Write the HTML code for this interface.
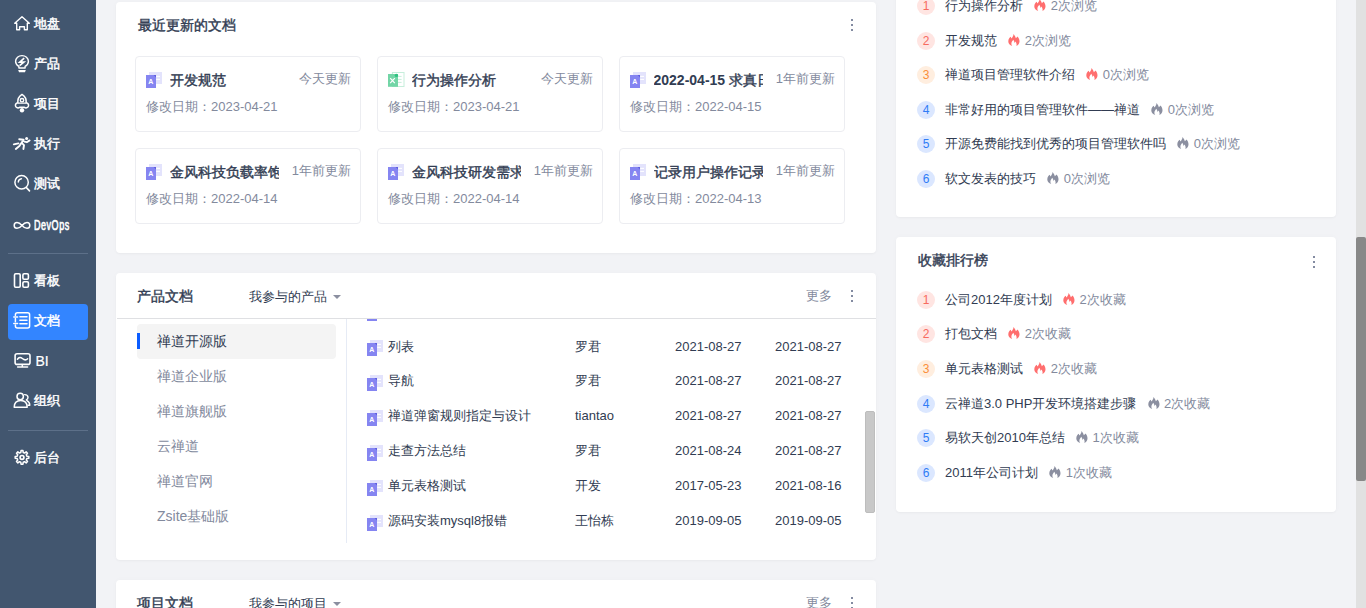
<!DOCTYPE html>
<html><head><meta charset="utf-8">
<style>
*{box-sizing:border-box;margin:0;padding:0}
html,body{width:1366px;height:608px;overflow:hidden}
body{font-family:"Liberation Sans",sans-serif;background:#f2f3f6;position:relative;color:#313c52;font-size:13px}
.abs{position:absolute}
#side{position:absolute;left:0;top:0;width:96px;height:608px;background:#42566f}
.mi{position:absolute;left:8px;width:80px;height:36px;color:#fff;font-weight:bold;font-size:13px;border-radius:4px}
.mi svg{position:absolute;left:6px;top:10px;width:16px;height:16px}
.mi span{position:absolute;left:26px;top:0;line-height:36px}
.mi.act{background:#3385ff}
.st{position:absolute;left:34px;line-height:20px;color:#fff;font-weight:normal;-webkit-text-stroke:0.45px #fff;font-size:13px;white-space:nowrap}
.dev{font-size:15px;-webkit-text-stroke:0.7px #fff;letter-spacing:.9px;transform:scaleX(.6);transform-origin:0 0}
.sep{position:absolute;left:8px;width:80px;height:1px;background:#5d7089}
.card{position:absolute;background:#fff;border-radius:4px;box-shadow:0 1px 2px rgba(0,0,0,.03),0 0 6px rgba(0,0,0,.025)}
.ttl{position:absolute;font-size:14px;font-weight:normal;-webkit-text-stroke:0.4px #313c52;color:#313c52;line-height:20px}
.kebab{position:absolute;width:2px;height:12px}
.kebab i{position:absolute;left:0;width:2.4px;height:2.4px;border-radius:50%;background:#5a6582}
.dc{position:absolute;width:226px;height:76px;border:1px solid #ecedf1;border-radius:4px;background:#fff}
.dc .ic{position:absolute;left:10px;top:15px}
.dc .nm{position:absolute;left:33.5px;top:13px;font-size:14px;font-weight:normal;-webkit-text-stroke:0.4px #313c52;line-height:20px;white-space:nowrap;overflow:hidden;width:109.5px}
.dc .up{position:absolute;right:9px;top:12px;font-size:13px;color:#838a9d;line-height:20px}
.dc .dt{position:absolute;left:10px;top:40px;font-size:13px;color:#838a9d;line-height:20px}
.tr{position:absolute;left:0;width:529px;height:35px}
.tr .ti{position:absolute;left:20px;top:10.5px}
.tr span{position:absolute;top:7px;line-height:20px;font-size:13px;white-space:nowrap;color:#313c52}
.tr .c1{left:41px}.tr .c2{left:228px}.tr .c3{left:328px}.tr .c4{left:428px}
.gray{color:#838a9d}
.row{position:absolute;left:0;height:35px;line-height:20px;font-size:13px;white-space:nowrap}
.row > *{position:absolute;top:0}
.rk{position:absolute;left:21px;height:18px;line-height:18px;font-size:13px;white-space:nowrap}
.rk .b{position:absolute;left:0;top:0;width:18px;height:18px;border-radius:50%;text-align:center;font-size:12px}
.rk .t{position:absolute;left:28px;top:-1px;line-height:20px}
.rk .fi{display:inline-block;vertical-align:top;margin:3px 4.5px 0 11.2px}
.b1{background:#ffe5e2;color:#f76b5f}
.b3{background:#ffeedf;color:#fa8f3a}
.b4{background:#dbe7ff;color:#2f7cf6}
.pm{position:absolute;left:21px;width:199px;height:35px;line-height:35px;padding-left:20px;font-size:14px;color:#838a9d}
.pm.act{background:#f4f4f4;color:#313c52;border-radius:4px}
.pm.act:before{content:"";position:absolute;left:0;top:9px;width:3px;height:16px;background:#0b5cff}
</style></head><body>
<div id="side">
<div class="abs" style="left:8px;top:304px;width:80px;height:36px;background:#3385ff;border-radius:4px"></div>
<div class="sep" style="top:253px"></div>
<div class="sep" style="top:430px"></div>
<svg class="abs" style="left:0;top:0" width="96" height="608" viewBox="0 0 96 608" fill="none" stroke="#fff" stroke-width="1.4" stroke-linejoin="round" stroke-linecap="round">
<path d="M22 16.7L29.3 23.3H27.3V29.8H24.4V26.8H19.6V29.8H16.7V23.3H14.7Z"/>
<path d="M18.9 68V66.4C16.6 65 15.6 63.4 15.6 61.4C15.6 57.9 18.5 55.6 22 55.6C25.5 55.6 28.4 57.9 28.4 61.4C28.4 63.4 27.4 65 25.1 66.4V68Z"/>
<path d="M18.2 70.1H25.8L25 72.2H19Z" fill="#fff" stroke="none"/>
<path d="M24.2 58.2L19.8 62.2H23.8L19.6 65.6" stroke-width="1.7" stroke-linejoin="miter" stroke-linecap="butt"/>
<path d="M17.8 102.8C17.5 98.8 19 96.2 22 94.4C25 96.2 26.5 98.8 26.2 102.8A2.55 2.55 0 1 1 24.4 107.3H19.6A2.55 2.55 0 1 1 17.8 102.8Z" stroke-width="1.5"/><path d="M18 103.2H26" stroke-width="1.2"/>
<circle cx="22" cy="100.2" r="1.7" stroke-width="1.4"/>
<circle cx="22" cy="110.2" r="2.2" fill="#fff" stroke="none"/>
<circle cx="26.6" cy="138.6" r="1.5" fill="#fff" stroke="none"/>
<path d="M13.8 144.4L18.4 143.4M19.2 139.2L23.6 139.7L19.4 146L15.8 149M22.2 143.4L24 145.2L23.4 149M24.4 141.6L26.8 142.2L29.6 140.4" stroke-width="1.9"/>
<circle cx="21.6" cy="182.2" r="6.7" stroke-width="1.5"/>
<path d="M26.4 187.6L29.5 190.9" stroke-width="1.6"/>
<path d="M18.3 182A3.6 3.6 0 0 1 21.5 178.7" stroke-width="1.4"/>
<path d="M22 225.4C20 223.2 18.6 222.6 17 222.6C15.3 222.6 14.2 223.8 14.2 225.4C14.2 227 15.3 228.2 17 228.2C18.6 228.2 20 227.6 22 225.4C24 223.2 25.4 222.6 27 222.6C28.7 222.6 29.8 223.8 29.8 225.4C29.8 227 28.7 228.2 27 228.2C25.4 228.2 24 227.6 22 225.4Z" stroke-width="1.5"/>
<g stroke-width="1.6"><rect x="14.5" y="273.7" width="5.7" height="13.5" rx="1.2"/>
<rect x="22.9" y="273.7" width="5.5" height="5.5" rx="1.2"/>
<rect x="22.9" y="281.7" width="5.5" height="5.5" rx="1.2"/></g>
<path d="M15.4 315.4V314.8C15.4 313.6 16.2 312.8 17.4 312.8H27.6C28.8 312.8 29.6 313.6 29.6 314.8V325.9C29.6 327.1 28.8 327.9 27.6 327.9H17.4C16.2 327.9 15.4 327.1 15.4 325.9V325M15.4 318.4V321.8" stroke-width="1.5"/>
<path d="M13.8 316.9H17.6M13.8 323.4H17.6M19.9 316.8H27M19.9 320.3H27M19.9 323.8H27" stroke-width="1.5"/>
<rect x="15.1" y="353.7" width="14.9" height="10.7" rx="2" stroke-width="1.6"/>
<path d="M17.4 359.2C19 357 20.6 357 22.4 358.5C24 359.9 25.8 360.6 27.6 358.7" stroke-width="1.5"/>
<path d="M17.6 367.1H27.6M22.3 365V367" stroke-width="1.5"/>
<circle cx="20.2" cy="396.5" r="3.2" stroke-width="1.5"/>
<path d="M14.2 407.2C14.2 403 16.8 400.4 20.7 400.4C24.6 400.4 27.2 403 27.2 407.2Z" stroke-width="1.5"/>
<path d="M24.6 394.6C26.6 394.6 28 395.8 28 397.4C28 398.6 27.4 399.4 26.3 399.9M27 400.6C29.2 401.8 29.8 403.6 29.8 405.2H28"/>
<path d="M20.79 452.55 L21.04 450.57 L22.96 450.57 L23.21 452.55 L24.58 453.11 L26.15 451.89 L27.51 453.25 L26.29 454.82 L26.85 456.19 L28.83 456.44 L28.83 458.36 L26.85 458.61 L26.29 459.98 L27.51 461.55 L26.15 462.91 L24.58 461.69 L23.21 462.25 L22.96 464.23 L21.04 464.23 L20.79 462.25 L19.42 461.69 L17.85 462.91 L16.49 461.55 L17.71 459.98 L17.15 458.61 L15.17 458.36 L15.17 456.44 L17.15 456.19 L17.71 454.82 L16.49 453.25 L17.85 451.89 L19.42 453.11Z" stroke-width="1.5"/>
<circle cx="22" cy="457.4" r="1.9" stroke-width="1.7"/>
</svg>
<div class="st" style="top:14px">地盘</div>
<div class="st" style="top:54px">产品</div>
<div class="st" style="top:94px">项目</div>
<div class="st" style="top:134px">执行</div>
<div class="st" style="top:174px">测试</div>
<div class="st dev" style="top:215px">DevOps</div>
<div class="st" style="top:271px">看板</div>
<div class="st" style="top:311px">文档</div>
<div class="st" style="top:351px;left:35.5px;font-size:14px;-webkit-text-stroke:0.2px #fff">BI</div>
<div class="st" style="top:391px">组织</div>
<div class="st" style="top:448px">后台</div>
</div>


<div class="card" style="left:116px;top:2px;width:760px;height:251px">
<div class="ttl" style="left:22px;top:13px">最近更新的文档</div>
<div class="kebab" style="left:735px;top:17px"><i style="top:0"></i><i style="top:4.9px"></i><i style="top:9.8px"></i></div>
<div class="dc" style="left:19px;top:54px"><svg class="ic" width="17" height="17"><rect x="3" y="0" width="13" height="12" fill="#e3e3fc"/>
<path d="M10.2 4.4H14M10.2 7.4H14" stroke="#fff" stroke-width="1"/>
<rect x="0" y="3" width="10" height="13" fill="#8585f1"/>
<path d="M7.6 3H10V5.4Z" fill="#5e5edf"/>
<text x="4.7" y="12" font-size="7" font-family="Liberation Sans" font-weight="bold" fill="#fff" text-anchor="middle">A</text></svg><div class="nm">开发规范</div><div class="up">今天更新</div><div class="dt">修改日期：2023-04-21</div></div>
<div class="dc" style="left:261px;top:54px"><svg class="ic" width="17" height="17"><rect x="4.4" y="0.5" width="11.6" height="14" fill="#fff" stroke="#c6eedb" stroke-width="1"/>
<path d="M10 4.4H13.6M10 7.4H13.6M10 10.4H13.6" stroke="#c6eedb" stroke-width="1"/>
<rect x="0" y="2" width="10" height="12.8" fill="#72d5a6"/>
<circle cx="8.4" cy="3.4" r="1.7" fill="#2dc281"/>
<path d="M2.2 6.2L6.8 11.2M6.8 6.2L2.2 11.2" stroke="#fff" stroke-width="1.2"/></svg><div class="nm">行为操作分析</div><div class="up">今天更新</div><div class="dt">修改日期：2023-04-21</div></div>
<div class="dc" style="left:503px;top:54px"><svg class="ic" width="17" height="17"><rect x="3" y="0" width="13" height="12" fill="#e3e3fc"/>
<path d="M10.2 4.4H14M10.2 7.4H14" stroke="#fff" stroke-width="1"/>
<rect x="0" y="3" width="10" height="13" fill="#8585f1"/>
<path d="M7.6 3H10V5.4Z" fill="#5e5edf"/>
<text x="4.7" y="12" font-size="7" font-family="Liberation Sans" font-weight="bold" fill="#fff" text-anchor="middle">A</text></svg><div class="nm"><b style="-webkit-text-stroke:0">2022-04-15</b> 求真日报</div><div class="up">1年前更新</div><div class="dt">修改日期：2022-04-15</div></div>
<div class="dc" style="left:19px;top:146px"><svg class="ic" width="17" height="17"><rect x="3" y="0" width="13" height="12" fill="#e3e3fc"/>
<path d="M10.2 4.4H14M10.2 7.4H14" stroke="#fff" stroke-width="1"/>
<rect x="0" y="3" width="10" height="13" fill="#8585f1"/>
<path d="M7.6 3H10V5.4Z" fill="#5e5edf"/>
<text x="4.7" y="12" font-size="7" font-family="Liberation Sans" font-weight="bold" fill="#fff" text-anchor="middle">A</text></svg><div class="nm">金风科技负载率饱和度</div><div class="up">1年前更新</div><div class="dt">修改日期：2022-04-14</div></div>
<div class="dc" style="left:261px;top:146px"><svg class="ic" width="17" height="17"><rect x="3" y="0" width="13" height="12" fill="#e3e3fc"/>
<path d="M10.2 4.4H14M10.2 7.4H14" stroke="#fff" stroke-width="1"/>
<rect x="0" y="3" width="10" height="13" fill="#8585f1"/>
<path d="M7.6 3H10V5.4Z" fill="#5e5edf"/>
<text x="4.7" y="12" font-size="7" font-family="Liberation Sans" font-weight="bold" fill="#fff" text-anchor="middle">A</text></svg><div class="nm">金风科技研发需求</div><div class="up">1年前更新</div><div class="dt">修改日期：2022-04-14</div></div>
<div class="dc" style="left:503px;top:146px"><svg class="ic" width="17" height="17"><rect x="3" y="0" width="13" height="12" fill="#e3e3fc"/>
<path d="M10.2 4.4H14M10.2 7.4H14" stroke="#fff" stroke-width="1"/>
<rect x="0" y="3" width="10" height="13" fill="#8585f1"/>
<path d="M7.6 3H10V5.4Z" fill="#5e5edf"/>
<text x="4.7" y="12" font-size="7" font-family="Liberation Sans" font-weight="bold" fill="#fff" text-anchor="middle">A</text></svg><div class="nm">记录用户操作记录</div><div class="up">1年前更新</div><div class="dt">修改日期：2022-04-13</div></div>
</div>

<div class="card" style="left:116px;top:273px;width:760px;height:287px;overflow:hidden">
<div class="ttl" style="left:21px;top:13px">产品文档</div>
<div class="abs" style="left:133px;top:14px;line-height:20px;font-size:13px;color:#313c52">我参与的产品</div>
<svg class="abs" style="left:217px;top:22px" width="8" height="4"><path d="M0 0H8L4 4Z" fill="#8b8fa0"/></svg>
<div class="abs gray" style="left:690px;top:13px;line-height:20px;font-size:13px">更多</div>
<div class="kebab" style="left:735px;top:17px"><i style="top:0"></i><i style="top:4.9px"></i><i style="top:9.8px"></i></div>
<div class="abs" style="left:1px;top:45px;width:759px;height:1px;background:#dfe0e3"></div>
<div class="pm act" style="top:51px">禅道开源版</div>
<div class="pm" style="top:86px">禅道企业版</div>
<div class="pm" style="top:121px">禅道旗舰版</div>
<div class="pm" style="top:156px">云禅道</div>
<div class="pm" style="top:191px">禅道官网</div>
<div class="pm" style="top:226px">Zsite基础版</div>
<div class="abs" style="left:230px;top:46px;width:1px;height:224px;background:#e6ebf5"></div>
<div class="abs" style="left:231px;top:46px;width:529px;height:241px;overflow:hidden">
 <div class="abs" style="left:0;top:-24.4px;width:529px">
  <div class="tr" style="top:0"><svg class="ti" width="17" height="17"><rect x="3" y="0" width="13" height="12" fill="#e3e3fc"/>
<path d="M10.2 4.4H14M10.2 7.4H14" stroke="#fff" stroke-width="1"/>
<rect x="0" y="3" width="10" height="13" fill="#8585f1"/>
<path d="M7.6 3H10V5.4Z" fill="#5e5edf"/>
<text x="4.7" y="12" font-size="7" font-family="Liberation Sans" font-weight="bold" fill="#fff" text-anchor="middle">A</text></svg><span class="c1"></span></div>
  <div class="tr" style="top:34.9px"><svg class="ti" width="17" height="17"><rect x="3" y="0" width="13" height="12" fill="#e3e3fc"/>
<path d="M10.2 4.4H14M10.2 7.4H14" stroke="#fff" stroke-width="1"/>
<rect x="0" y="3" width="10" height="13" fill="#8585f1"/>
<path d="M7.6 3H10V5.4Z" fill="#5e5edf"/>
<text x="4.7" y="12" font-size="7" font-family="Liberation Sans" font-weight="bold" fill="#fff" text-anchor="middle">A</text></svg><span class="c1">列表</span><span class="c2">罗君</span><span class="c3">2021-08-27</span><span class="c4">2021-08-27</span></div>
  <div class="tr" style="top:69.8px"><svg class="ti" width="17" height="17"><rect x="3" y="0" width="13" height="12" fill="#e3e3fc"/>
<path d="M10.2 4.4H14M10.2 7.4H14" stroke="#fff" stroke-width="1"/>
<rect x="0" y="3" width="10" height="13" fill="#8585f1"/>
<path d="M7.6 3H10V5.4Z" fill="#5e5edf"/>
<text x="4.7" y="12" font-size="7" font-family="Liberation Sans" font-weight="bold" fill="#fff" text-anchor="middle">A</text></svg><span class="c1">导航</span><span class="c2">罗君</span><span class="c3">2021-08-27</span><span class="c4">2021-08-27</span></div>
  <div class="tr" style="top:104.7px"><svg class="ti" width="17" height="17"><rect x="3" y="0" width="13" height="12" fill="#e3e3fc"/>
<path d="M10.2 4.4H14M10.2 7.4H14" stroke="#fff" stroke-width="1"/>
<rect x="0" y="3" width="10" height="13" fill="#8585f1"/>
<path d="M7.6 3H10V5.4Z" fill="#5e5edf"/>
<text x="4.7" y="12" font-size="7" font-family="Liberation Sans" font-weight="bold" fill="#fff" text-anchor="middle">A</text></svg><span class="c1">禅道弹窗规则指定与设计</span><span class="c2">tiantao</span><span class="c3">2021-08-27</span><span class="c4">2021-08-27</span></div>
  <div class="tr" style="top:139.6px"><svg class="ti" width="17" height="17"><rect x="3" y="0" width="13" height="12" fill="#e3e3fc"/>
<path d="M10.2 4.4H14M10.2 7.4H14" stroke="#fff" stroke-width="1"/>
<rect x="0" y="3" width="10" height="13" fill="#8585f1"/>
<path d="M7.6 3H10V5.4Z" fill="#5e5edf"/>
<text x="4.7" y="12" font-size="7" font-family="Liberation Sans" font-weight="bold" fill="#fff" text-anchor="middle">A</text></svg><span class="c1">走查方法总结</span><span class="c2">罗君</span><span class="c3">2021-08-24</span><span class="c4">2021-08-27</span></div>
  <div class="tr" style="top:174.5px"><svg class="ti" width="17" height="17"><rect x="3" y="0" width="13" height="12" fill="#e3e3fc"/>
<path d="M10.2 4.4H14M10.2 7.4H14" stroke="#fff" stroke-width="1"/>
<rect x="0" y="3" width="10" height="13" fill="#8585f1"/>
<path d="M7.6 3H10V5.4Z" fill="#5e5edf"/>
<text x="4.7" y="12" font-size="7" font-family="Liberation Sans" font-weight="bold" fill="#fff" text-anchor="middle">A</text></svg><span class="c1">单元表格测试</span><span class="c2">开发</span><span class="c3">2017-05-23</span><span class="c4">2021-08-16</span></div>
  <div class="tr" style="top:209.4px"><svg class="ti" width="17" height="17"><rect x="3" y="0" width="13" height="12" fill="#e3e3fc"/>
<path d="M10.2 4.4H14M10.2 7.4H14" stroke="#fff" stroke-width="1"/>
<rect x="0" y="3" width="10" height="13" fill="#8585f1"/>
<path d="M7.6 3H10V5.4Z" fill="#5e5edf"/>
<text x="4.7" y="12" font-size="7" font-family="Liberation Sans" font-weight="bold" fill="#fff" text-anchor="middle">A</text></svg><span class="c1">源码安装mysql8报错</span><span class="c2">王怡栋</span><span class="c3">2019-09-05</span><span class="c4">2019-09-05</span></div>
 </div>
</div>
<div class="abs" style="left:749px;top:138px;width:10px;height:102px;background:#c8c8c8;border-radius:2px;border:1px solid #bdbdbd"></div>
</div>

<div class="card" style="left:116px;top:580px;width:760px;height:100px">
<div class="ttl" style="left:21px;top:13px">项目文档</div>
<div class="abs" style="left:133px;top:14px;line-height:20px;font-size:13px;color:#313c52">我参与的项目</div>
<svg class="abs" style="left:217px;top:22px" width="8" height="4"><path d="M0 0H8L4 4Z" fill="#8b8fa0"/></svg>
<div class="abs gray" style="left:690px;top:13px;line-height:20px;font-size:13px">更多</div>
<div class="kebab" style="left:735px;top:17px"><i style="top:0"></i><i style="top:4.9px"></i><i style="top:9.8px"></i></div>
</div>
<div class="card" style="left:896px;top:-100px;width:440px;height:317px">
<div class="rk" style="top:96.9px"><span class="b b1">1</span><span class="t">行为操作分析<svg class="fi" width="12" height="12" viewBox="0 0 12 12"><path d="M5.6 0C6.4 1.6 7.6 2.6 7.8 4.2C8.4 3.6 8.9 3.2 9.4 2.4C10.8 3.8 11.6 5.6 11.5 7.6C11.4 9.6 10.2 11.2 8.4 12C8.9 10.6 8.6 8.8 7.4 7.6C7.2 8.2 6.9 8.6 6.6 9C6.4 7.6 5.9 6.6 5.3 5.8C4.3 7 3.3 8.3 3.4 10C3.4 10.8 3.7 11.5 4.2 12C1.9 11.2 .3 9.6 .3 7.4C.3 5.2 1.6 3.8 2.6 2.8C3.1 3.4 3.3 4 3.4 4.6C4.4 3.4 5.4 2 5.6 0Z" fill="#ff6e6e"/></svg><span class="gray">2次浏览</span></span></div>
<div class="rk" style="top:131.5px"><span class="b b1">2</span><span class="t">开发规范<svg class="fi" width="12" height="12" viewBox="0 0 12 12"><path d="M5.6 0C6.4 1.6 7.6 2.6 7.8 4.2C8.4 3.6 8.9 3.2 9.4 2.4C10.8 3.8 11.6 5.6 11.5 7.6C11.4 9.6 10.2 11.2 8.4 12C8.9 10.6 8.6 8.8 7.4 7.6C7.2 8.2 6.9 8.6 6.6 9C6.4 7.6 5.9 6.6 5.3 5.8C4.3 7 3.3 8.3 3.4 10C3.4 10.8 3.7 11.5 4.2 12C1.9 11.2 .3 9.6 .3 7.4C.3 5.2 1.6 3.8 2.6 2.8C3.1 3.4 3.3 4 3.4 4.6C4.4 3.4 5.4 2 5.6 0Z" fill="#ff6e6e"/></svg><span class="gray">2次浏览</span></span></div>
<div class="rk" style="top:166.1px"><span class="b b3">3</span><span class="t">禅道项目管理软件介绍<svg class="fi" width="12" height="12" viewBox="0 0 12 12"><path d="M5.6 0C6.4 1.6 7.6 2.6 7.8 4.2C8.4 3.6 8.9 3.2 9.4 2.4C10.8 3.8 11.6 5.6 11.5 7.6C11.4 9.6 10.2 11.2 8.4 12C8.9 10.6 8.6 8.8 7.4 7.6C7.2 8.2 6.9 8.6 6.6 9C6.4 7.6 5.9 6.6 5.3 5.8C4.3 7 3.3 8.3 3.4 10C3.4 10.8 3.7 11.5 4.2 12C1.9 11.2 .3 9.6 .3 7.4C.3 5.2 1.6 3.8 2.6 2.8C3.1 3.4 3.3 4 3.4 4.6C4.4 3.4 5.4 2 5.6 0Z" fill="#ff6e6e"/></svg><span class="gray">0次浏览</span></span></div>
<div class="rk" style="top:200.7px"><span class="b b4">4</span><span class="t">非常好用的项目管理软件——禅道<svg class="fi" width="12" height="12" viewBox="0 0 12 12"><path d="M5.6 0C6.4 1.6 7.6 2.6 7.8 4.2C8.4 3.6 8.9 3.2 9.4 2.4C10.8 3.8 11.6 5.6 11.5 7.6C11.4 9.6 10.2 11.2 8.4 12C8.9 10.6 8.6 8.8 7.4 7.6C7.2 8.2 6.9 8.6 6.6 9C6.4 7.6 5.9 6.6 5.3 5.8C4.3 7 3.3 8.3 3.4 10C3.4 10.8 3.7 11.5 4.2 12C1.9 11.2 .3 9.6 .3 7.4C.3 5.2 1.6 3.8 2.6 2.8C3.1 3.4 3.3 4 3.4 4.6C4.4 3.4 5.4 2 5.6 0Z" fill="#8b8fa0"/></svg><span class="gray">0次浏览</span></span></div>
<div class="rk" style="top:235.3px"><span class="b b4">5</span><span class="t">开源免费能找到优秀的项目管理软件吗<svg class="fi" width="12" height="12" viewBox="0 0 12 12"><path d="M5.6 0C6.4 1.6 7.6 2.6 7.8 4.2C8.4 3.6 8.9 3.2 9.4 2.4C10.8 3.8 11.6 5.6 11.5 7.6C11.4 9.6 10.2 11.2 8.4 12C8.9 10.6 8.6 8.8 7.4 7.6C7.2 8.2 6.9 8.6 6.6 9C6.4 7.6 5.9 6.6 5.3 5.8C4.3 7 3.3 8.3 3.4 10C3.4 10.8 3.7 11.5 4.2 12C1.9 11.2 .3 9.6 .3 7.4C.3 5.2 1.6 3.8 2.6 2.8C3.1 3.4 3.3 4 3.4 4.6C4.4 3.4 5.4 2 5.6 0Z" fill="#8b8fa0"/></svg><span class="gray">0次浏览</span></span></div>
<div class="rk" style="top:269.9px"><span class="b b4">6</span><span class="t">软文发表的技巧<svg class="fi" width="12" height="12" viewBox="0 0 12 12"><path d="M5.6 0C6.4 1.6 7.6 2.6 7.8 4.2C8.4 3.6 8.9 3.2 9.4 2.4C10.8 3.8 11.6 5.6 11.5 7.6C11.4 9.6 10.2 11.2 8.4 12C8.9 10.6 8.6 8.8 7.4 7.6C7.2 8.2 6.9 8.6 6.6 9C6.4 7.6 5.9 6.6 5.3 5.8C4.3 7 3.3 8.3 3.4 10C3.4 10.8 3.7 11.5 4.2 12C1.9 11.2 .3 9.6 .3 7.4C.3 5.2 1.6 3.8 2.6 2.8C3.1 3.4 3.3 4 3.4 4.6C4.4 3.4 5.4 2 5.6 0Z" fill="#8b8fa0"/></svg><span class="gray">0次浏览</span></span></div>
</div>
<div class="card" style="left:896px;top:237px;width:440px;height:275px">
<div class="ttl" style="left:22px;top:12.7px">收藏排行榜</div>
<div class="kebab" style="left:416.6px;top:19px"><i style="top:0"></i><i style="top:4.9px"></i><i style="top:9.8px"></i></div>
<div class="rk" style="top:53.6px"><span class="b b1">1</span><span class="t">公司2012年度计划<svg class="fi" width="12" height="12" viewBox="0 0 12 12"><path d="M5.6 0C6.4 1.6 7.6 2.6 7.8 4.2C8.4 3.6 8.9 3.2 9.4 2.4C10.8 3.8 11.6 5.6 11.5 7.6C11.4 9.6 10.2 11.2 8.4 12C8.9 10.6 8.6 8.8 7.4 7.6C7.2 8.2 6.9 8.6 6.6 9C6.4 7.6 5.9 6.6 5.3 5.8C4.3 7 3.3 8.3 3.4 10C3.4 10.8 3.7 11.5 4.2 12C1.9 11.2 .3 9.6 .3 7.4C.3 5.2 1.6 3.8 2.6 2.8C3.1 3.4 3.3 4 3.4 4.6C4.4 3.4 5.4 2 5.6 0Z" fill="#ff6e6e"/></svg><span class="gray">2次收藏</span></span></div>
<div class="rk" style="top:88.2px"><span class="b b1">2</span><span class="t">打包文档<svg class="fi" width="12" height="12" viewBox="0 0 12 12"><path d="M5.6 0C6.4 1.6 7.6 2.6 7.8 4.2C8.4 3.6 8.9 3.2 9.4 2.4C10.8 3.8 11.6 5.6 11.5 7.6C11.4 9.6 10.2 11.2 8.4 12C8.9 10.6 8.6 8.8 7.4 7.6C7.2 8.2 6.9 8.6 6.6 9C6.4 7.6 5.9 6.6 5.3 5.8C4.3 7 3.3 8.3 3.4 10C3.4 10.8 3.7 11.5 4.2 12C1.9 11.2 .3 9.6 .3 7.4C.3 5.2 1.6 3.8 2.6 2.8C3.1 3.4 3.3 4 3.4 4.6C4.4 3.4 5.4 2 5.6 0Z" fill="#ff6e6e"/></svg><span class="gray">2次收藏</span></span></div>
<div class="rk" style="top:122.9px"><span class="b b3">3</span><span class="t">单元表格测试<svg class="fi" width="12" height="12" viewBox="0 0 12 12"><path d="M5.6 0C6.4 1.6 7.6 2.6 7.8 4.2C8.4 3.6 8.9 3.2 9.4 2.4C10.8 3.8 11.6 5.6 11.5 7.6C11.4 9.6 10.2 11.2 8.4 12C8.9 10.6 8.6 8.8 7.4 7.6C7.2 8.2 6.9 8.6 6.6 9C6.4 7.6 5.9 6.6 5.3 5.8C4.3 7 3.3 8.3 3.4 10C3.4 10.8 3.7 11.5 4.2 12C1.9 11.2 .3 9.6 .3 7.4C.3 5.2 1.6 3.8 2.6 2.8C3.1 3.4 3.3 4 3.4 4.6C4.4 3.4 5.4 2 5.6 0Z" fill="#ff6e6e"/></svg><span class="gray">2次收藏</span></span></div>
<div class="rk" style="top:157.5px"><span class="b b4">4</span><span class="t">云禅道3.0 PHP开发环境搭建步骤<svg class="fi" width="12" height="12" viewBox="0 0 12 12"><path d="M5.6 0C6.4 1.6 7.6 2.6 7.8 4.2C8.4 3.6 8.9 3.2 9.4 2.4C10.8 3.8 11.6 5.6 11.5 7.6C11.4 9.6 10.2 11.2 8.4 12C8.9 10.6 8.6 8.8 7.4 7.6C7.2 8.2 6.9 8.6 6.6 9C6.4 7.6 5.9 6.6 5.3 5.8C4.3 7 3.3 8.3 3.4 10C3.4 10.8 3.7 11.5 4.2 12C1.9 11.2 .3 9.6 .3 7.4C.3 5.2 1.6 3.8 2.6 2.8C3.1 3.4 3.3 4 3.4 4.6C4.4 3.4 5.4 2 5.6 0Z" fill="#8b8fa0"/></svg><span class="gray">2次收藏</span></span></div>
<div class="rk" style="top:192.2px"><span class="b b4">5</span><span class="t">易软天创2010年总结<svg class="fi" width="12" height="12" viewBox="0 0 12 12"><path d="M5.6 0C6.4 1.6 7.6 2.6 7.8 4.2C8.4 3.6 8.9 3.2 9.4 2.4C10.8 3.8 11.6 5.6 11.5 7.6C11.4 9.6 10.2 11.2 8.4 12C8.9 10.6 8.6 8.8 7.4 7.6C7.2 8.2 6.9 8.6 6.6 9C6.4 7.6 5.9 6.6 5.3 5.8C4.3 7 3.3 8.3 3.4 10C3.4 10.8 3.7 11.5 4.2 12C1.9 11.2 .3 9.6 .3 7.4C.3 5.2 1.6 3.8 2.6 2.8C3.1 3.4 3.3 4 3.4 4.6C4.4 3.4 5.4 2 5.6 0Z" fill="#8b8fa0"/></svg><span class="gray">1次收藏</span></span></div>
<div class="rk" style="top:226.8px"><span class="b b4">6</span><span class="t">2011年公司计划<svg class="fi" width="12" height="12" viewBox="0 0 12 12"><path d="M5.6 0C6.4 1.6 7.6 2.6 7.8 4.2C8.4 3.6 8.9 3.2 9.4 2.4C10.8 3.8 11.6 5.6 11.5 7.6C11.4 9.6 10.2 11.2 8.4 12C8.9 10.6 8.6 8.8 7.4 7.6C7.2 8.2 6.9 8.6 6.6 9C6.4 7.6 5.9 6.6 5.3 5.8C4.3 7 3.3 8.3 3.4 10C3.4 10.8 3.7 11.5 4.2 12C1.9 11.2 .3 9.6 .3 7.4C.3 5.2 1.6 3.8 2.6 2.8C3.1 3.4 3.3 4 3.4 4.6C4.4 3.4 5.4 2 5.6 0Z" fill="#8b8fa0"/></svg><span class="gray">1次收藏</span></span></div>
</div>
<div class="abs" style="left:1356px;top:0;width:10px;height:608px;background:#e1e1e1"></div>
<div class="abs" style="left:1356px;top:237px;width:10px;height:244px;background:#888;border-radius:2px"></div>
</body></html>
